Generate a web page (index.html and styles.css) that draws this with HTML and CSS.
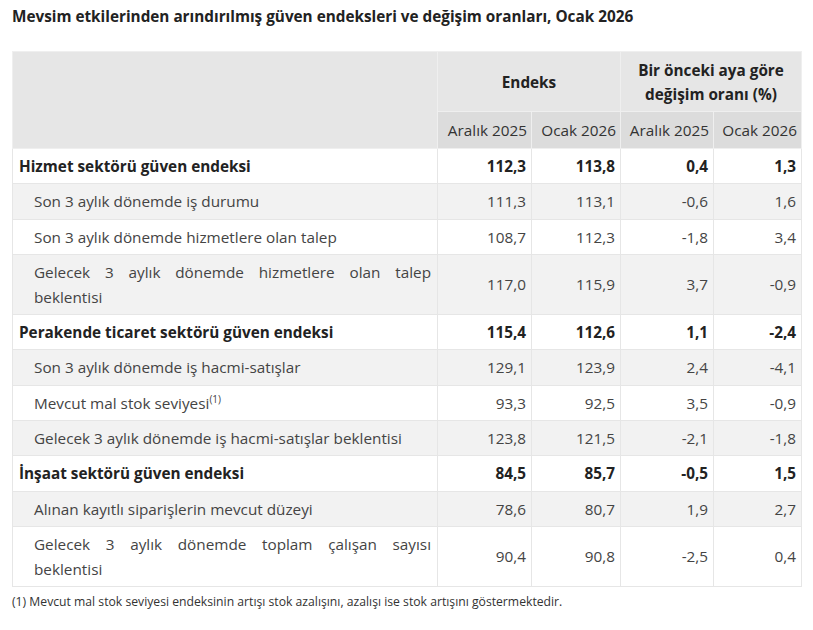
FILE: index.html
```html
<!DOCTYPE html>
<html lang="tr">
<head>
<meta charset="utf-8">
<title>Güven endeksleri</title>
<link rel="stylesheet" href="styles.css">
</head>
<body>
<h1 class="title">Mevsim etkilerinden arındırılmış güven endeksleri ve değişim oranları, Ocak 2026</h1>
<table class="data">
  <colgroup>
    <col class="c-label"><col class="c-a"><col class="c-b"><col class="c-c"><col class="c-d">
  </colgroup>
  <thead>
    <tr class="h1">
      <th rowspan="2" class="blank"></th>
      <th colspan="2">Endeks</th>
      <th colspan="2">Bir önceki aya göre<br>değişim oranı (%)</th>
    </tr>
    <tr class="h2">
      <th>Aralık 2025</th><th>Ocak 2026</th><th>Aralık 2025</th><th>Ocak 2026</th>
    </tr>
  </thead>
  <tbody>
    <tr class="main"><td class="lbl">Hizmet sektörü güven endeksi</td><td>112,3</td><td>113,8</td><td>0,4</td><td>1,3</td></tr>
    <tr class="sub"><td class="lbl">Son 3 aylık dönemde iş durumu</td><td>111,3</td><td>113,1</td><td>-0,6</td><td>1,6</td></tr>
    <tr class="sub"><td class="lbl">Son 3 aylık dönemde hizmetlere olan talep</td><td>108,7</td><td>112,3</td><td>-1,8</td><td>3,4</td></tr>
    <tr class="sub"><td class="lbl">Gelecek 3 aylık dönemde hizmetlere olan talep beklentisi</td><td>117,0</td><td>115,9</td><td>3,7</td><td>-0,9</td></tr>
    <tr class="main"><td class="lbl">Perakende ticaret sektörü güven endeksi</td><td>115,4</td><td>112,6</td><td>1,1</td><td>-2,4</td></tr>
    <tr class="sub"><td class="lbl">Son 3 aylık dönemde iş hacmi-satışlar</td><td>129,1</td><td>123,9</td><td>2,4</td><td>-4,1</td></tr>
    <tr class="sub"><td class="lbl">Mevcut mal stok seviyesi<sup>(1)</sup></td><td>93,3</td><td>92,5</td><td>3,5</td><td>-0,9</td></tr>
    <tr class="sub"><td class="lbl">Gelecek 3 aylık dönemde iş hacmi-satışlar beklentisi</td><td>123,8</td><td>121,5</td><td>-2,1</td><td>-1,8</td></tr>
    <tr class="main"><td class="lbl">İnşaat sektörü güven endeksi</td><td>84,5</td><td>85,7</td><td>-0,5</td><td>1,5</td></tr>
    <tr class="sub"><td class="lbl">Alınan kayıtlı siparişlerin mevcut düzeyi</td><td>78,6</td><td>80,7</td><td>1,9</td><td>2,7</td></tr>
    <tr class="sub"><td class="lbl">Gelecek 3 aylık dönemde toplam çalışan sayısı beklentisi</td><td>90,4</td><td>90,8</td><td>-2,5</td><td>0,4</td></tr>
  </tbody>
</table>
<p class="note">(1) Mevcut mal stok seviyesi endeksinin artışı stok azalışını, azalışı ise stok artışını göstermektedir.</p>
</body>
</html>
```
FILE: styles.css
```css
html, body {
  margin: 0;
  padding: 0;
  background: #fff;
}
body {
  padding: 5px 12px 0 12px;
  font-family: "Open Sans", "Noto Sans", sans-serif;
  color: #444;
}
.title {
  margin: 0 0 24px 0;
  font-size: 15.3px;
  font-weight: 700;
  color: #222;
  line-height: 22px;
}
.data {
  width: 789px;
  border-collapse: collapse;
  table-layout: fixed;
  font-size: 15.3px;
  border: 1px solid #e4e4e4;
}
.c-label { width: 425px; }
.c-a { width: 94px; }
.c-b { width: 89px; }
.c-c { width: 93px; }
.c-d { width: 88px; }
.data th {
  background: #e6e6e6;
  color: #222;
  font-weight: 700;
  line-height: 24px;
  border: 1px solid #efefef;
  padding: 0 4px;
}
.h1 th { height: 59px; }
.h2 th {
  height: 36px;
  background: #dcdcdc;
  font-weight: 400;
  color: #333;
  text-align: right;
  padding: 0 4px;
  white-space: nowrap;
}
.data td {
  border: 1px solid #e6e6e6;
  padding: 5px 5px 4.3px 5px;
  line-height: 25px;
  text-align: right;
  vertical-align: middle;
}
.data td.lbl {
  text-align: justify;
  padding-left: 6px;
  padding-right: 6px;
}
.data tbody tr:nth-child(odd) td { background: #fff; }
.data tbody tr:nth-child(even) td { background: #f2f2f2; }
.main td {
  font-weight: 700;
  color: #222;
}
.sub td.lbl { padding-left: 21px; }
.data sup {
  font-size: 10px;
  line-height: 0;
  vertical-align: 6px;
}
.note {
  margin: 6px 0 0 0;
  font-size: 12.2px;
  line-height: 18px;
  color: #333;
}
```
